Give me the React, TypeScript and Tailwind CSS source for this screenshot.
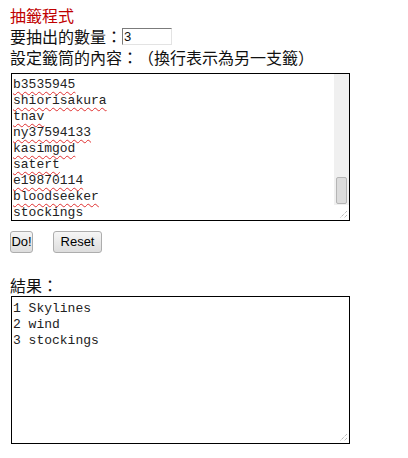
import React from "react";

const lines1 = [
  "b3535945",
  "shiorisakura",
  "tnav",
  "ny37594133",
  "kasimgod",
  "satert",
  "e19870114",
  "bloodseeker",
];

const results = ["1 Skylines", "2 wind", "3 stockings"];

function Grip() {
  return (
    <svg width="15" height="15" viewBox="0 0 15 15" className="block">
      <line x1="13" y1="6" x2="6" y2="13" stroke="#9a9a9a" strokeWidth="1" strokeDasharray="1 1" />
      <line x1="13" y1="10" x2="10" y2="13" stroke="#9a9a9a" strokeWidth="1" strokeDasharray="1 1" />
    </svg>
  );
}

export default function App() {
  return (
    <div className="w-[408px] h-[458px] bg-white pl-[10px] pt-[5px] font-['Noto_Sans_CJK_TC',sans-serif] text-[16px] leading-[21px] text-[#111] [text-spacing-trim:space-all]">
      <div className="h-[21px] text-[#c00000]">抽籤程式</div>
      <div className="flex items-center h-[21px]">
        <span>要抽出的數量：</span>
        <div className="w-[50px] h-[17px] border border-t-[#7b7b7b] border-l-[#7b7b7b] border-b-[#e3e3e3] border-r-[#e3e3e3] pl-[1px] font-['Liberation_Sans',sans-serif] text-[13px] leading-[15px]">
          3
        </div>
      </div>
      <div className="h-[21px]">設定籤筒的內容：（換行表示為另一支籤）</div>
      <div className="mt-[5px] ml-[1px] w-[339px] h-[148px] border border-black flex">
        <div className="flex-1 pl-[1px] pt-[3px] overflow-hidden font-['Liberation_Mono',monospace] text-[13px] leading-[16px] text-[#222]">
          {lines1.map((l) => (
            <div key={l}>
              <span className="underline decoration-wavy decoration-[#e03030] decoration-1 underline-offset-[3px]">{l}</span>
            </div>
          ))}
          <div>stockings</div>
        </div>
        <div className="w-[15px] flex flex-col">
          <div className="flex-1 bg-[#f0f0f0] flex flex-col justify-end items-center pb-[1px]">
            <div className="w-[11px] h-[27px] rounded-[2px] border border-[#b5b5b5] bg-[#dcdcdc]" />
          </div>
          <div className="h-[15px] bg-white">
            <Grip />
          </div>
        </div>
      </div>
      <div className="mt-[10px] flex gap-[20px] font-['Liberation_Sans',sans-serif] text-[13px]">
        <button className="w-[23px] h-[22px] border border-[#adadad] rounded-[3px] bg-linear-to-b from-[#f6f6f6] to-[#dddddd] text-black leading-[20px]">
          Do!
        </button>
        <button className="w-[49px] h-[22px] border border-[#adadad] rounded-[3px] bg-linear-to-b from-[#f6f6f6] to-[#dddddd] text-black leading-[20px]">
          Reset
        </button>
      </div>
      <div className="mt-[22px] h-[21px]">結果：</div>
      <div className="ml-[1px] w-[339px] h-[148px] border border-black flex">
        <div className="flex-1 pl-[1px] pt-[4px] font-['Liberation_Mono',monospace] text-[13px] leading-[16px] text-[#222]">
          {results.map((l) => (
            <div key={l}>{l}</div>
          ))}
        </div>
        <div className="w-[15px] flex flex-col justify-end">
          <Grip />
        </div>
      </div>
    </div>
  );
}
